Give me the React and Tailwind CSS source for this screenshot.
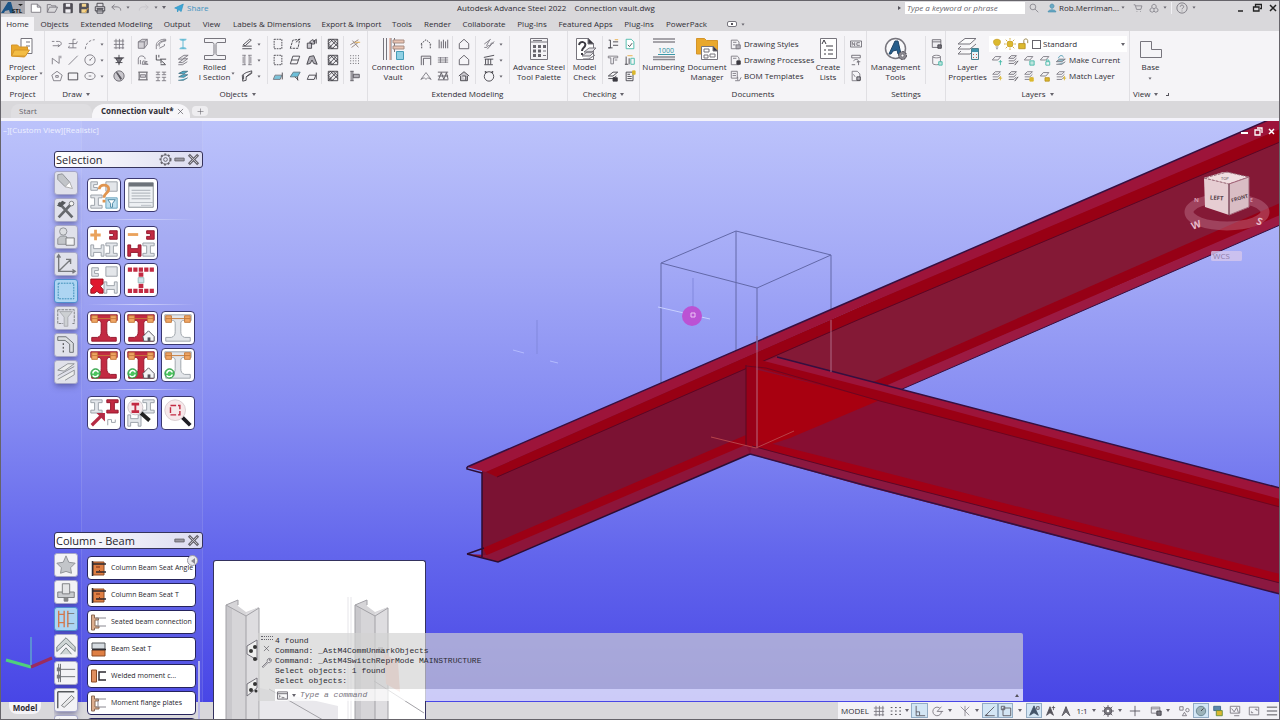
import React from "react";

const B = "#4db1cf";
const O = "#e8a93c";
const K = "#3c3a42";
const Y = "#dcb92e";
const T = "#3fb6a5";

// Each glyph is a list of [path, stroke, fill] on a 14 x 14 grid.
const GLYPHS = {
  newFile: [["M1.500 2.500h7l4 3.500v6h-11z M8.500 2.500v3.500h4", , "#fff"]],
  open: [["M1.500 12V3h4l1 1.500h5V6 M1.500 12l2.500-6h9.500l-3 6z"]],
  save: [["M2 2h10v10.500H2z", K, "#55535b"], ["M4.500 2h5v3.500h-5z M4 8.500h6v4H4z", "none", "#efeef2"]],
  saveAs: [["M2 2h10v10.500H2z", K, "#55535b"], ["M4.500 2h5v3.500h-5z M4 8.500h6v4H4z", "none", "#f3d48e"], ["M8 12l4-5", O]],
  print: [["M3.500 5V1.500h7V5 M1.500 5.500h11v5h-11z M3.500 9h7v4h-7z", K, "#dddbe0"], ["M3 7.500h8", K]],
  undo: [["M12.500 10c0-4-3-5-10-4 M5.500 3L2 6l3.500 3", "#77757d"]],
  redo: [["M1.500 10c0-4 3-5 10-4 M8.500 3L12 6 8.500 9", "#c4c2c8"]],
  plane: [["M1 7L13 1.500 10 12 6.500 9 5 12.500 4.500 8z", "#2c94c4", "#3da6d6"]],
  search: [["M9.500 5.500a4 4 0 1 1-8 0a4 4 0 1 1 8 0 M8.500 8.500L13 13", "#77757d"]],
  user: [["M7 1.500c4 0 3.500 6 0 6s-4-6 0-6z M1.500 12.500c0-4 11-4 11 0z", "#4a8fae", "#6aa9c4"]],
  cart: [["M1 2.500h2l2 6.500h6l1.500-5H4 M5.500 11.500v1 M10.500 11.500v1", "#77757d"]],
  apps: [["M7 1.500l3 2v3l-3 1.500-3-1.500v-3z M4 7L1.500 8.500v3L4.500 13l2.500-1.500V8 M7 11.500L9.500 13l3-1.500v-3L10 7"]],
  help: [["M13 7a6 6 0 1 1-12 0a6 6 0 1 1 12 0 M5 5.500c0-2.500 4-2.500 4 0C9 7 7 7 7 8.500 M7 10v1"]],
  polyline: [["M1 4h3 M6 4h3c4 0 4 5 0 5H2 M8 7.500L10 9 8 10.500"]],
  offset: [["M7 1.500v10 M2 6.500h9L12 4 M2 11.500h9 M10 1.500H7 M3 9l-1.500 2.500"]],
  arc: [["M1.500 13C2 6 6 2.500 12.500 2", , , "3 2"]],
  spline: [["M1.500 12V5l8 6V2 M11.500 2v3"]],
  line: [["M2 12.500L12.500 2"]],
  circle: [["M13 7a6 6 0 1 1-12 0a6 6 0 1 1 12 0 M7 7l3-3 M6 7h2"]],
  pentagon: [["M7 1.500l6 4.500-2 6.500H3L1 6z M5.500 8.500h3v-2h-3z"]],
  rect: [["M1.500 3.500h11v8h-11z", K]],
  ellipse: [["M13 7c0 5.500-12 5.500-12 0s12-5.500 12 0 M5.500 7h3"]],
  grid: [["M3.500 1v12 M7.500 1v12 M11.500 1v12 M1 3.500h12 M1 7.500h12 M1 11.500h12"]],
  level: [["M1 4.500h12 M7 1v12 M3 10h8", K], ["M3 5l4 6 4-6z", K, "#77757d"]],
  compass: [["M13 7a6 6 0 1 1-12 0a6 6 0 1 1 12 0", "#66646c", "#c9c7cd"], ["M4 3l5 8 1-1L5 3z", "#55535b", "#55535b"]],
  cube: [["M1.500 4.500L6 1.500h6v6L8.500 12h-7z", , "#d2d0d5"], ["M1.500 4.500h7V12 M8.500 4.500L12 1.500"]],
  curvedBeam: [["M1.500 13V8C2 4 7 1 12.500 1.500v2C9 4 5 5 5 9v1 M3 9c1-4 5-6 9-6 M5 12l6-3V7"]],
  foldBeam: [["M1.500 12V6c0-5 8-5 8 0 M4 12V7 M7 8l5 1-4 1.500 5 1.500H6z"]],
  junction: [["M1.500 1v6h5 M4.500 1v3 M6 6h7 M7.500 8L12 12 M6.500 12.500h6 M7 6v5", K]],
  channel: [["M1.500 2.500h11 M1.500 11.500h11 M2.500 3v8 M11.500 3v8", K], ["M4 5.500h6v3H4z", , "#d2d0d5"]],
  quad: [["M1 2.500h5 M3.500 2.500v3 M1 5.500h5 M8 2.500h5 M10.500 2.500v3 M8 5.500h5 M1 8.500h5 M3.500 8.500v4 M1 12.500h5 M8 8.500h5 M10.500 8.500v4 M8 12.500h5"]],
  column: [["M3 1.500h8 M3 12.500h8 M7 1.500v11 M4 2.500h6 M4 11.500h6", B]],
  beam: [["M1.500 6L8 1.500h5L6.500 6z M2 10l6-4.500h4.500L6.500 10z M1.500 12.500h5L12 9", , "#e4e3e7"]],
  beamBlue: [["M2 4L7 1.500h5.500L8 4.500z M2 8l5-2.500h5.500L8 8.500z M1.500 12h6L12.500 9", "#4a7484", B]],
  taper: [["M1.500 12.500h11 M1.500 9.500h11 M2.500 8L10 1.500l2 1L5 9z", K]],
  compound: [["M1.500 1.500h4 M4.500 1.500v11 M1.500 12.500h4 M12.500 1.500h-4 M9.500 1.500v11 M12.500 12.500h-4 M2.500 3v8 M11.500 3v8"]],
  fold: [["M1.500 6L6 3l6.500-2v3L6 8v4l-4 1z M6 8l6-5 M3 6v5", K]],
  plateRect: [["M2.500 1.500h9v11h-9z", K, , "2 1"]],
  platePoly: [["M1.500 12L4.500 2.500l8-1-2 10.500z", K, , "3 1"], ["M8 5L13 1", K]],
  plateCone: [["M1.500 6h5v6h-5z M4 5l3-3 3 1v4H7z M8 5l4-3.500v5", K, "#c9c7cd"]],
  plateSkew: [["M4.500 2.500h8l-3 9h-8z M3 7h8", K]],
  plateTwist: [["M1 12L4 3l5-1 4 10-4-1-2-4-2 4z", K, "#b2b0b7"]],
  plateFold: [["M1.500 11l2-5h8l-2 5z", , "#7cc3da"], ["M12 3v8", K]],
  plateBlue: [["M1.500 8L5 2.500h8L10 8z", "#55737f", "#6cbfd9"], ["M7 8l4 4 M10 8v4", K]],
  platePlain: [["M1.500 11l2-5h8l-2 5z M12 3v8", K]],
  grating: [["M1.500 1.500h11v11h-11z", K, "#efeef2"], ["M1.500 4l2.500-2.500 8.500 8.500 M1.500 9l4 3.500 M1.500 6.500L7 12.500 M7 1.500L12.500 7 M12 1.500L1.500 12.500 M7 1.500L1.500 7 M12.500 6L6 12.500", K]],
  bolts: [["M1.500 8L11 2 M3 11l8-6 M4 3l7 8", "#8b7b73"], ["M7 5h6", O]],
  dots: [["M1.500 2h12 M1.500 5h12 M1.500 8h12 M1.500 11h12", K, , "1 2"]],
  weldSpot: [["M2.500 1.500v11 M4.500 1.500v11 M1.500 1.500h4 M1.500 12.500h4 M5 5h7v4H5z", "#55535b", "#b2b0b7"]],
  gable: [["M1 7L7 2l6 5 M2 7v5 M12 7v5", K, , "2 1"]],
  fence: [["M2.500 2v10 M5 4v8 M7.500 2v10 M10 4v8 M12.500 2v10", "#55535b"]],
  portal: [["M1.500 13V2.500h11V13 M4 13V5h8", "#55535b"]],
  rails: [["M1 4.500h12 M1 7h12 M1 9.500h12 M4 3.500v7 M10 3.500v7"]],
  brace: [["M1 11L7 3l6 8 M1 11l4-2 2 2 2-2 4 2"]],
  lattice: [["M1 2.500h12 M1 11.500h12 M2 11L5 3l3 8 3-8 2 8 M1 7h12", "#55535b"]],
  house: [["M1.500 6.500L7 1.500l5.500 5v6h-11z", "#55535b"]],
  houseFill: [["M1 7l6-5 6 5 M3 7v5.500h8V7 M5 7h4v5", K, "#c9c7cd"]],
  stairs: [["M1.500 11h3l1-2h3l1-3h3 M1.500 7L9 1.500 M5 13l8-9 M4 9l4-7", "#77757d"]],
  railing: [["M1 4l12-2.500 M2 6h10 M3 6v6 M6 6v6 M9 6v6 M1.500 12.500h10", K, "#d2d0d5"]],
  ring: [["M12.500 7.500a5.500 5.500 0 1 1-11 0a5.500 5.500 0 1 1 11 0 M3 4L2.500 1.500 5 3 M11 4l.500-2.500L9 3", K]],
  checkDim: [["M2 2.500h2v9H1.500h5 M7 4.500h6 M7 8.500h6", K], ["M9 2h4", O]],
  checkDoc: [["M2.500 1.500h6l3 3v8h-9z", T, "#fff"], ["M4.500 8l2 2 3-4", K]],
  checkPipe: [["M1.500 2.500h11v2h-5v7h-3v-7h-3z M9 7h3", "#77757d"]],
  checkNum: [["M2.500 3v9 M1 12h4 M6 5v7", K], ["M8 5h4v7H8z", T], ["M4 2h6", O]],
  checkPlate: [["M1.500 7L7 2.500h5.500L7 7z M1.500 10H7l4-3", K], ["M7 9h5v4H7z", K, K]],
  checkList: [["M2.500 2.500h8v10h-8z M4 5h3 M4 7.500h5 M4 10h5", K], ["M10 1h3v4h-3z", Y, Y]],
  docStyle: [["M1.500 2.500h7l2 2v8h-9z M3.500 5h4 M3.500 8h3"], ["M7 8h5v4.500H7z", , "#b2b0b7"]],
  docGear: [["M1.500 2.500h7l2 2v8h-9z M3.500 5h4"], ["M8 8h4v4H8z", K, K]],
  docBom: [["M1.500 1.500h7v8h-7z M3 4h4 M3 6.500h4 M6 12.500h5l2-4 M9 8v4"]],
  nc: [["M.500 3.500h13v7H.500z M2.500 9V5l3 4V5 M11.500 5.500H8v3h3.500", "#66646c"]],
  dxf: [["M2 1.500h10v3H2z M4 8c4-4 8 0 4 2 M2 12.500h4 M10 9v4 M8 9h4", "#66646c"]],
  pdfGear: [["M2.500 1.500h6l3 3v8h-9z M4 5l2 3"], ["M8 8h4v4H8z", K, "#b2b0b7"]],
  window: [["M1.500 2h10v9h-10z M1.500 4.500h10", "#66646c", "#efeef2"], ["M8 8h4v4H8z", K, "#77757d"]],
  database: [["M2 3c0-2 9-2 9 0v8c0 2-9 2-9 0z M2 3c0 2 9 2 9 0"], ["M9 9h4v4H9z", T, "#bfe4de"]],
  bulb: [["M7 1.500c6 0 4 5.500 2 7H5C3 7 1 1.500 7 1.500z", "#caa32a", Y], ["M5.500 10.500h3 M6 12.500h2", "#77757d"]],
  sun: [["M10.500 7a3.500 3.500 0 1 1-7 0a3.500 3.500 0 1 1 7 0", "#caa32a", Y], ["M7 0v2 M7 12v2 M0 7h2 M12 7h2 M2 2l2 2 M10 10l2 2 M12 2l-2 2 M4 10l-2 2", "#caa32a"]],
  lockOpen: [["M2 6.500h7.500v6H2z", "#b8901e", Y], ["M8 6V3c0-2.500 4.500-2.500 4.500 0v3", "#8b7431"]],
  layA: [["M1.500 7L5 3h6.500L8 7z"], ["M11 7v6 M9 9h4", T]],
  layB: [["M2 5l3-3h6L8 5z M2 8h6l3-3 M2 11h6l3-3", "#66646c"], ["M9 13l4-5", K]],
  layC: [["M1.500 7L5 3h6.500L8 7z"], ["M8 8h5v5H8z", T, "#bfe4de"]],
  layD: [["M1.500 7L5 3h6.500L8 7z"], ["M8 9h4.500v4H8z M9 9V7h2.500v2", T]],
  layE: [["M2 5l3-3h6L8 5z M2 8h6l3-3 M2 11h6l3-3"], ["M11 7v5 M9 9.500h4", Y]],
  layF: [["M2 5l3-3h6L8 5z M2 8h6l3-3 M2 11h6l3-3"], ["M8 9h4v4H8z", Y, Y]],
  layG: [["M1.500 7L5 3h6.500L8 7z"], ["M7 9h5v4H7z", "#b8901e", Y]],
  makeCurrent: [["M1.500 9L5 6h7L8 9z M1.500 12H8l4-3", , "#8fbccb"], ["M4 5c1-4 5-4 6-1", "#3b8fa8"]],
  gear: [["M7 2.500a4.500 4.500 0 1 1 0 9a4.500 4.500 0 1 1 0-9", "#55535b", "#77757d"], ["M7 0v3 M7 11v3 M0 7h3 M11 7h3 M2 2l2 2 M10 10l2 2 M12 2l-2 2 M4 10l-2 2", "#55535b"], ["M7 5.500a1.500 1.500 0 1 1 0 3a1.500 1.500 0 1 1 0-3", "none", "#fff"]],
  snap: [["M2 3h12 M2 7h12 M2 11h12", K, , "2 3"]],
  ortho: [["M2.500 1v11.500H13 M2.500 8h4v4", "#55535b"]],
  polar: [["M11 7.500a5 5 0 1 1-2-4 M6 7.500h7 M6 7.500L11 2"]],
  iso: [["M2 2l10 10 M7 1v6 M12 2l-5 5 M7 7v6", "#8a8890"]],
  track: [["M1.500 12.500h11 M2 12L12 2 M1 12h4", "#55535b"]],
  osnap: [["M3.500 3.500h9v9h-9z M1.500 1.500h4v4h-4z", "#55535b"]],
  annoA: [["M7 1L2 12l5-3 5 3z", "#43556a", "#43556a"], ["M10 2h3v3h-3z", "#55535b"]],
  annoB: [["M7 2L3 12l4-3 4 3z", "#55535b", "#55535b"], ["M11 1v5 M9 3h4", "#55535b"]],
  annoC: [["M7 2L2.500 12.500 7 8l4.500 4.500z M7 2v6", "#55535b", "#77757d"]],
  plus: [["M7 1v12 M1 7h12", "#55535b"]],
  screen: [["M1.500 2.500h10v7h-10z M1.500 4.500h10"], ["M8 7h5v5H8z", K, "#77757d"]],
  shapes: [["M2 2h4v4H2z M13 6a2 2 0 1 1-4 0a2 2 0 1 1 4 0 M5 12.500l2.500-4 2.500 4z"]],
  disc: [["M12.500 7a5.500 5.500 0 1 1-11 0a5.500 5.500 0 1 1 11 0", "#62808a", "#9cb2b8"], ["M7 7l3-3", K]],
  picture: [["M2 1.500h8v5H2z", "#3b668b", "#5c87a8"], ["M5 6.500h7v6H5z", "#5c8a3c", Y]],
  graph: [["M1.500 1.500h11v8h-11z M3 4l3 4 3-5 2 6 M6 12.500h6"]],
  fullscreen: [["M1.500 2.500h11v9h-11z M8 5h2.500v2 M4 7.500V9h2"]],
  menu: [["M1 2.500h12 M1 7h12 M1 11.500h12", K]],
  wrench: [["M1.500 12.500L8 6c-1-3 2-5 4-4L10 4l1 1 2-2c1 3-2 5-4 4L3 13z", "#66646c", "#f2f2f2"]],
  close: [["M3 3l8 8 M11 3l-8 8", "#55535b"]],
};

function Glyph({ n, className = "size-3" }) {
  return (
    <svg viewBox="0 0 14 14" className={`${className} shrink-0`} aria-hidden="true">
      {GLYPHS[n].map(([d, s, f, dash], i) => (
        <path key={i} d={d} stroke={s || "#77757d"} fill={f || "none"} strokeDasharray={dash} />
      ))}
    </svg>
  );
}

function Caret({ className = "" }) {
  return <span className={`inline-block shrink-0 border-x-2 border-t-3 border-x-transparent border-t-[#66646c] ${className}`} />;
}

function Tool({ n, caret }) {
  return (
    <button aria-label={n} className="flex h-4 w-full items-center justify-center gap-1">
      <Glyph n={n} />
      {caret && <Caret className="scale-75" />}
    </button>
  );
}

function Col({ w = "w-[17px]", icons, caret }) {
  return (
    <div className={`${w} flex shrink-0 flex-col`}>
      {icons.map((n, i) => <Tool key={i} n={n} caret={caret} />)}
    </div>
  );
}

const Sep = () => <span className="mx-px h-12 w-px shrink-0 bg-[#e0dfe3]" />;

function Big({ w, icon, lines, caret }) {
  return (
    <button className={`${w} relative flex shrink-0 flex-col items-center whitespace-nowrap text-center`}>
      <svg viewBox="0 0 24 24" className="mt-px size-6" fill="none" stroke="#77757d" aria-hidden="true">{icon}</svg>
      <span className="mt-px leading-[10px]">{lines[0]}<br />{lines[1]}</span>
      {caret && <Caret className="absolute right-0 bottom-3 scale-75" />}
    </button>
  );
}

function Panel({ w, title, caret, children }) {
  return (
    <section className={`${w} flex shrink-0 flex-col border-r border-[#e0dfe3]`}>
      <div className="flex h-14 justify-start pt-[5px]">{children}</div>
      <h2 className="flex items-center justify-center gap-1 leading-[14px]">
        {title}{caret && <Caret />}
      </h2>
    </section>
  );
}

const bigIcons = {
  explorer: <><path d="M11 1.500h11v15H11z" fill="#fff" /><path d="M16 5h4M16 9h4" /><path d="M1.500 19V8h6l2 2h8v4l-3 6z" fill="#e9a82c" stroke="#d4942a" /><path d="M1.500 19l3-6h15l-4 6z" fill="#f3bd45" stroke="#d4942a" /></>,
  section: <path d="M1.500 1.500h21v4H15c-1.500 0-2 1-2 2v9c0 1 .500 2 2 2h7.500v4h-21v-4H9c1.500 0 2-1 2-2v-9c0-1-.500-2-2-2H1.500z" />,
  vault: <><path d="M2.500 1v22M5.500 1v22M10 1v22M13.500 1v14" /><path d="M9 1v22" stroke="#d98f75" /><path d="M12 3h11v3H12zM12 9h11v3H12z" fill="#e9c3b2" stroke="#a78d83" /><path d="M15.500 14.500h7v8h-7z" fill="#8fd0e4" stroke="#459cb7" /></>,
  palette: <><path d="M3.500 1.500h17v21h-17zM3.500 5h17" fill="#f4f3f6" /><path d="M6 8h3v3H6zM11 8h3v3h-3zM16 8h3v3h-3zM6 12.500h3v3H6zM11 12.500h3v3h-3zM6 17h3v3H6zM11 17h3v3h-3z" fill="#66646c" stroke="none" /><path d="M6 3.500h9M16 14h3M16 18.500h3" /></>,
  check: <><path d="M3.500 1.500h12l5 5v16h-17z" fill="#fff" /><path d="M15 1l6 6h-6z" fill="#3c3a42" /><path d="M6 8c1-5 8-3 6 1-1 2-3 2-3 5M9 16v2" stroke="#3c3a42" strokeWidth="2" /><path d="M11 15l5-4h7l-4 4zM9 19l5-4h7l-4 4zM10 22h6l6-4" fill="#e2e1e5" /></>,
  numbering: <><path d="M1 2h22M1 5h22M1 20h22M1 22.500h22" stroke="#8a8890" strokeWidth="1.500" /><path d="M6 17.500h17" stroke="#3997a6" /><text x="6" y="15.500" fill="#2f8fa0" stroke="none" fontSize="7">1000</text></>,
  documents: <><path d="M1.500 17V1.500h8l2 2h11V17z" fill="#e9a82c" stroke="#d4942a" /><path d="M6.500 9.500h12l4 4v9h-16z" fill="#fff" /><path d="M9 12h5v3H9zM9 18h4v3H9zM15 17h5v3h-5z" /><path d="M18 9l5 5h-5z" fill="#3c3a42" /></>,
  lists: <><path d="M4.500 1.500h16v20h-16z" fill="#fff" /><path d="M6 7l2-4 2 4M10 9h7M8 13h2M12 13h5M8 17h2M12 17h5" stroke="#3c3a42" /></>,
  management: <><circle cx="11.500" cy="11.500" r="10" strokeWidth="1.500" fill="#f9f9fb" /><path d="M5 17L11 4h3l3 13h-3l-1-4-4 1-2 3z" fill="#265e8c" stroke="#1d4467" /><circle cx="18.500" cy="18.500" r="4" fill="#8a8890" stroke="#3c3a42" strokeDasharray="2 1" /><circle cx="18.500" cy="18.500" r="1.500" fill="#fff" /></>,
  layers: <><path d="M2 7L9 1.500h11L14 7zM2 12h12l6-5M2 17h12l6-5M2 12l3-3M2 17l3-3" fill="#fbfbfc" /><path d="M15.500 11.500h7v11h-7z" fill="#e8f3f5" stroke="#477f8d" /><path d="M16 12h6v3h-6z" fill="#3f95ad" stroke="none" /><path d="M17 17.500h4M17 20.500h4" stroke="#c05f53" strokeDasharray="1 2" /></>,
  base: <path d="M1.500 4.500h11v8h10v8h-21z" />,
};

const MENU = [
  ["Home", "w-[33px] bg-[#f5f4f7]"], ["Objects", "w-[41px]"], ["Extended Modeling", "w-[83px]"], ["Output", "w-[38px]"],
  ["View", "w-[31px]"], ["Labels & Dimensions", "w-[90px]"], ["Export & Import", "w-[69px]"], ["Tools", "w-[32px]"],
  ["Render", "w-[39px]"], ["Collaborate", "w-[54px]"], ["Plug-ins", "w-[42px]"], ["Featured Apps", "w-[65px]"],
  ["Plug-ins", "w-[42px]"], ["PowerPack", "w-[53px]"],
];

function TitleBar() {
  return (
    <header className="flex h-[13px] shrink-0 items-center whitespace-nowrap">
      <div className="flex w-[456px] shrink-0 items-center">
        <button aria-label="Application menu" className="mr-[5px] h-[13px] w-6 bg-[#a8a7ad]">
          <svg viewBox="0 0 24 13" className="h-[13px] w-6">
            <path d="M0 12L7 1h3l3 11H9l-1-3-4 1-1 2z" fill="#1d5486" />
            <path d="M17 3h5l-2.500 2z" fill="#222" />
            <text x="11" y="12" fontSize="6" fontWeight="700" fill="#1d1c22">STL</text>
          </svg>
        </button>
        <div className="flex items-center gap-1">
          {["newFile", "open", "save", "saveAs", "print", "undo"].map((n) => <button key={n} aria-label={n}><Glyph n={n} /></button>)}
          <Caret className="scale-75" />
          <button aria-label="redo" className="ml-1"><Glyph n="redo" /></button>
          <Caret className="scale-75" />
          <Caret />
          <button className="ml-1 flex items-center gap-[3px] text-[#3f93c0]"><Glyph n="plane" className="size-[10px]" />Share</button>
        </div>
      </div>
      <h1 className="flex flex-1 gap-2"><span>Autodesk Advance Steel 2022</span><span>Connection vault.dwg</span></h1>
      <div className="flex w-[381px] shrink-0 items-center">
        <span className="mr-1 border-y-2 border-l-3 border-y-transparent border-l-[#55535b]" />
        <input aria-label="Search" placeholder="Type a keyword or phrase" className="h-3 w-[120px] bg-white px-0.5 italic placeholder:text-[#66646c]" />
        <button aria-label="search" className="ml-1"><Glyph n="search" className="size-[10px]" /></button>
        <button className="ml-2 flex items-center gap-0.5"><Glyph n="user" className="size-[10px]" />Rob.Merriman...<Caret className="scale-75" /></button>
        <button aria-label="cart" className="ml-2"><Glyph n="cart" className="size-[10px]" /></button>
        <button aria-label="apps" className="ml-1.5 flex items-center gap-1"><Glyph n="apps" className="size-[10px]" /><Caret className="scale-75" /></button>
        <span className="mx-1 h-3 w-px bg-[#f1f0f4]" />
        <button aria-label="help" className="flex items-center gap-1"><Glyph n="help" /><Caret className="scale-75" /></button>
        <div className="ml-auto flex gap-1.5 pr-px">
          <button aria-label="Minimize"><svg viewBox="0 0 10 10" className="size-[10px]"><path d="M2 8h5" stroke="#222" strokeWidth="1.500" /></svg></button>
          <button aria-label="Restore"><svg viewBox="0 0 10 10" className="size-[10px]" fill="none" stroke="#222"><path d="M3.500 4V1.500h6v4H8M1.500 4h5.500v4H1.500z" strokeWidth="1.300" /></svg></button>
          <button aria-label="Close"><svg viewBox="0 0 10 10" className="size-[10px]"><path d="M2 2l6 6M8 2l-6 6" stroke="#222" strokeWidth="1.500" /></svg></button>
        </div>
      </div>
    </header>
  );
}

function Ribbon() {
  return (
    <div className="flex h-[70px] shrink-0 overflow-hidden bg-[#f5f4f7] whitespace-nowrap">
      <Panel w="w-[44px]" title="Project"><Big w="w-[42px]" icon={bigIcons.explorer} lines={["Project", "Explorer"]} caret /></Panel>
      <Panel w="w-[63px]" title="Draw" caret>
        <span className="w-[3px]" />
        <Col icons={["polyline", "spline", "pentagon"]} />
        <Col w="w-4" icons={["offset", "line", "rect"]} />
        <Col w="w-[26px]" icons={["arc", "circle", "ellipse"]} caret />
      </Panel>
      <Panel w="w-[260px]" title="Objects" caret>
        <Col w="w-[22px]" icons={["grid", "level", "compass"]} />
        <Sep />
        <Col w="w-[19px]" icons={["cube", "foldBeam", "channel"]} />
        <Col w="w-[17px]" icons={["curvedBeam", "junction", "quad"]} />
        <Sep />
        <Col w="w-[22px]" icons={["column", "beam", "beamBlue"]} />
        <Big w="w-[41px]" icon={bigIcons.section} lines={["Rolled", "I Section"]} caret />
        <Col w="w-[31px]" icons={["taper", "compound", "fold"]} caret />
        <Sep />
        <Col w="w-[17px]" icons={["plateRect", "plateRect", "plateFold"]} />
        <Col icons={["platePoly", "plateSkew", "plateBlue"]} />
        <Col w="w-[17px]" icons={["plateCone", "plateTwist", "platePlain"]} />
        <Sep />
        <Col w="w-[19px]" icons={["grating", "grating", "grating"]} />
        <Sep />
        <Col w="w-5" icons={["bolts", "dots", "weldSpot"]} />
      </Panel>
      <Panel w="w-[200px]" title="Extended Modeling">
        <Big w="w-[50px]" icon={bigIcons.vault} lines={["Connection", "Vault"]} />
        <Col w="w-4" icons={["gable", "portal", "brace"]} />
        <Col icons={["fence", "rails", "lattice"]} />
        <Sep />
        <Col w="w-5" icons={["house", "house", "houseFill"]} />
        <Sep />
        <Col w="w-[31px]" icons={["stairs", "railing", "ring"]} caret />
        <Sep />
        <Big w="w-[56px]" icon={bigIcons.palette} lines={["Advance Steel", "Tool Palette"]} />
      </Panel>
      <Panel w="w-[72px]" title="Checking" caret>
        <Big w="w-[33px]" icon={bigIcons.check} lines={["Model", "Check"]} />
        <Sep />
        <Col icons={["checkDim", "checkPipe", "checkPlate"]} />
        <Col icons={["checkDoc", "checkNum", "checkList"]} />
      </Panel>
      <Panel w="w-[227px]" title="Documents">
        <Big w="w-[47px]" icon={bigIcons.numbering} lines={["Numbering", ""]} />
        <Big w="w-[40px]" icon={bigIcons.documents} lines={["Document", "Manager"]} />
        <div className="ml-[3px] flex w-[83px] flex-col">
          {[["docStyle", "Drawing Styles"], ["docGear", "Drawing Processes"], ["docBom", "BOM Templates"]].map(([n, t]) => (
            <button key={t} className="flex h-4 items-center gap-0.5"><Glyph n={n} />{t}</button>
          ))}
        </div>
        <Big w="w-[30px]" icon={bigIcons.lists} lines={["Create", "Lists"]} />
        <Sep />
        <Col w="w-5" icons={["nc", "dxf", "pdfGear"]} />
      </Panel>
      <Panel w="w-[79px]" title="Settings">
        <Big w="w-[57px]" icon={bigIcons.management} lines={["Management", "Tools"]} />
        <Sep />
        <Col w="w-[19px]" icons={["window", "database"]} />
      </Panel>
      <Panel w="w-[184px]" title="Layers" caret>
        <Big w="w-[43px]" icon={bigIcons.layers} lines={["Layer", "Properties"]} />
        <div className="flex flex-1 flex-col pr-0.5">
          <div className="relative flex h-4 items-center gap-px bg-white pl-0.5">
            <Glyph n="bulb" /><Glyph n="sun" /><Glyph n="lockOpen" />
            <span className="ml-0.5 size-[9px] border border-[#66646c]" />
            <select aria-label="Layer" className="ml-px h-4 flex-1 appearance-none bg-transparent"><option>Standard</option></select>
            <Caret className="mr-0.5" />
          </div>
          {[["layA", "layB", "layC", "layD", "makeCurrent", "Make Current"], ["layE", "layB", "layF", "layG", "layE", "Match Layer"]].map((r) => (
            <div key={r[5]} className="flex h-4 items-center gap-1 pl-0.5">
              {r.slice(0, 4).map((n, i) => <button key={i} aria-label={n}><Glyph n={n} /></button>)}
              <button className="flex items-center gap-0.5"><Glyph n={r[4]} />{r[5]}</button>
            </div>
          ))}
        </div>
      </Panel>
      <section className="flex w-[41px] flex-col">
        <div className="flex h-14 pt-[5px]"><Big w="w-[41px]" icon={bigIcons.base} lines={["Base", <Caret key="c" className="scale-75" />]} /></div>
        <h2 className="flex items-center gap-1 pl-[3px] leading-[14px]">View <Caret /><span className="ml-1 size-[3px] border-r border-b border-[#55535b]" /></h2>
      </section>
    </div>
  );
}

function FileTabs() {
  return (
    <nav className="flex h-[17px] shrink-0 items-end pl-[10px]">
      <button className="h-[14px] w-[81px] rounded-t-lg bg-[#dfdee1] pl-2 text-left text-[#66646c]">Start</button>
      <div className="flex h-[14px] w-[98px] items-center rounded-t-xl bg-[#f7f6f9] pl-[9px] font-bold">
        <button>Connection vault*</button>
        <button aria-label="Close tab" className="ml-0.5"><Glyph n="close" className="size-[9px]" /></button>
      </div>
      <button aria-label="New tab" className="mb-[2px] ml-0.5 flex h-[10px] w-4 items-center justify-center rounded bg-[#eeedf0]"><Glyph n="plus" className="size-[7px]" /></button>
    </nav>
  );
}

function Model() {
  return (
    <svg viewBox="0 121 1280 581" preserveAspectRatio="xMidYMid slice" className="size-full" role="img" aria-label="Steel model view">
      <defs>
        <linearGradient id="sky" x1="0" y1="0" x2="0" y2="1">
          <stop offset="0" stopColor="#bcc3fb" /><stop offset="0.250" stopColor="#a3a9f6" />
          <stop offset="0.500" stopColor="#858bf2" /><stop offset="0.750" stopColor="#6265ec" /><stop offset="1" stopColor="#4846e6" />
        </linearGradient>
      </defs>
      <path d="M0 121h1280v581H0z" fill="url(#sky)" />
      <path d="M736 231v120M661 263v122M831 255v70" stroke="#6268a8" fill="none" />
      <path d="M661 263l75-32 95 24-74 33z" stroke="#6268a8" fill="none" />
      <path d="M482 471L860 307 1280 124v84L900 389 498 562 482 557z" fill="#7b1233" />
      <path d="M860 307L1280 124v84L873 386 746 440V360z" fill="#841936" />
      <path d="M482 474L746 360v80L482 555z" fill="#7b1233" />
      <path d="M467 467L860 297 1280 115v15L860 307 486 472z" fill="#9d143a" />
      <path d="M486 472L860 307 1280 129v13L860 319 497 477z" fill="#980014" />
      <path d="M497 477L860 319 1280 142" stroke="#5c0524" fill="none" />
      <path d="M873 382L1280 203v13L883 387z" fill="#960016" />
      <path d="M883 387L1280 215v10L900 390z" fill="#9c1a42" />
      <path d="M900 390L1280 225" stroke="#350f40" fill="none" />
      <path d="M483 548L746 435v11L487 556z" fill="#9c0015" />
      <path d="M467 554L487 555 750 443v11L498 562z" fill="#8d153a" />
      <path d="M467 467L860 297 1280 115" stroke="#350f40" fill="none" strokeWidth="1.500" />
      <path d="M467 467v2l15 4M482 472v85M467 554l31 8L750 454M467 554l17-6" stroke="#2c0d33" fill="none" strokeWidth="1.500" />
      <path d="M746 365L1280 502v92L750 454 746 445z" fill="#870e32" />
      <path d="M746 367L880 400 790 438 757 449 746 445z" fill="#a80010" />
      <path d="M746 367h10v80l-10-2z" fill="#980018" />
      <path d="M746 365v80" stroke="#5b0820" />
      <path d="M757 364L777 357 1280 488v12L880 397z" fill="#9d143a" />
      <path d="M746 365l14-5 120 31 400 108v8L880 401z" fill="#9a0014" />
      <path d="M746 366l20 2 114 33 400 106" stroke="#6d0520" fill="none" />
      <path d="M777 357L1280 488" stroke="#350f40" fill="none" strokeWidth="1.500" />
      <path d="M757 440L860 466 1280 574v9L860 475 752 447z" fill="#a20016" />
      <path d="M752 446L860 475 1280 583v11L860 485 750 454z" fill="#8b1840" />
      <path d="M752 446L860 475 1280 583" stroke="#5c0828" fill="none" />
      <path d="M750 454L860 484 1280 594" stroke="#350f40" fill="none" strokeWidth="1.500" />
      <path d="M757 336v112M831 320v52" stroke="#b06a86" fill="none" />
      <path d="M757 288v62" stroke="#6268a8" />
      <path d="M711 437l45 11 38-17" stroke="#b8434a" fill="none" />
      <path d="M658 307l52 12" stroke="#c8d0ff" /><path d="M693 278v30M537 320v34" stroke="#8188dd" />
      <path d="M513 350l11 3M550 361l8 2" stroke="#b3baff" />
      <circle cx="692" cy="316" r="10" fill="#bb52d4" /><path d="M691 313h4v4h-4z" fill="none" stroke="#ecc4f5" />
      <ellipse cx="1227" cy="212" rx="38" ry="14" fill="none" stroke="#c77f98" strokeOpacity="0.400" strokeWidth="9" />
      <text x="1194" y="202" fontSize="6" fontWeight="700" fill="#d898ad">N</text>
      <text x="1250" y="202" fontSize="5" fontWeight="700" fill="#d898ad">E</text>
      <path d="M1204 178l19-6 26 5v30l-20 8-24-8z" fill="#e6cdd2" />
      <path d="M1204 178l25 6 20-7-22-5z" fill="#f0dde0" stroke="#93606f" strokeDasharray="3 1" />
      <path d="M1229 184l20-7v30l-20 8z" fill="#d9bdc4" stroke="#a3667a" />
      <path d="M1229 184v31" stroke="#6d3c4e" />
      <text x="1210" y="200" fontSize="6" fontWeight="700" fill="#554049" transform="rotate(5 1216 198)">LEFT</text>
      <text x="1231" y="200" fontSize="5" fontWeight="700" fill="#554049" transform="rotate(-16 1239 198)">FRONT</text>
      <text x="1221" y="180" fontSize="4" fill="#554049">TOP</text>
      <text x="1191" y="228" fontSize="10" fontWeight="700" fill="#e8bac8" transform="rotate(-20 1197 224)">W</text>
      <text x="1257" y="225" fontSize="10" fontWeight="700" fill="#e8bac8" transform="rotate(20 1260 221)">S</text>
      <path d="M1213 251h27c2 0 2 1 2 2v6c0 2-1 2-2 2h-27c-2 0-2-1-2-2v-6c0-2 1-2 2-2z" fill="#d4c7ee" fillOpacity="0.800" />
      <text x="1213" y="259" fontSize="8" fill="#8f7fa8">WCS</text>
      <path d="M1241 133h7" stroke="#fff" strokeWidth="2" />
      <path d="M1255 130h5v5h-5zM1257 128h5v5" stroke="#fff" fill="none" strokeWidth="1.300" />
      <path d="M1269 129l5 5M1274 129l-5 5" stroke="#fff" strokeWidth="1.500" />
      <path d="M31 637v29" stroke="#5b8fd4" strokeWidth="2" /><path d="M31 667L6 660" stroke="#4fd07c" strokeWidth="3" /><path d="M31 667l21-9" stroke="#9b2c5e" strokeWidth="3" />
    </svg>
  );
}

const IBEAM = "M3 3h28v6h-8c-2 0-3 1-3 3v9c0 3 1 5 4 6h6v4H4v-4h6c3-1 4-3 4-6v-9c0-2-1-3-3-3H3z";
const smallI = (x, y, f, s) => <path transform={`translate(${x} ${y})`} d="M0 0h12v3H8v8h4v3H0v-3h4V3H0z" fill={f} stroke={s} />;
const smallH = (x, y, f, s) => <path transform={`translate(${x} ${y})`} d="M0 0h3v4h8V0h3v12h-3V8H3v4H0z" fill={f} stroke={s} />;
const Marked = ({ red, home, refresh }) => (
  <>
    <path d={IBEAM} fill={red ? "#c22a42" : "#e3e6ea"} stroke={red ? "#93142b" : "#9da3aa"} />
    <path d="M4 4h6v7H4zM24 4h6v7h-6zM4 7h26" fill="#f0a765" stroke="#c57a3b" />
    {home && <><path d="M19 26l6-6 6 6v5H20z" fill="#f2f3f4" stroke="#55535b" /><path d="M24 27h3v4h-3z" fill="#55535b" /></>}
    {refresh && <><circle cx="8" cy="26" r="5" fill="#4cc45f" stroke="#2d9643" /><path d="M5 26c1-4 5-4 6-1M11 27c-1 3-5 3-6 1" stroke="#fff" fill="none" strokeWidth="1.500" /></>}
  </>
);
const lg = "#e3e6ea", ls = "#9aa0a7", rd = "#c22a42", rs = "#93142b";
const lens = (cx, cy) => <><path d={`M${cx + 6} ${cy + 6}l9 8`} stroke="#222" strokeWidth="4" /><circle cx={cx} cy={cy} r="8" fill="#f3e6ea" fillOpacity="0.850" stroke="#c9c4c8" /></>;

const SELECTION = [
  [
    [["Select by filter", <g key="a"><path d="M3 3h7v3H6v3h4v3H3z" fill={lg} stroke={ls} /><path d="M19 3h12v10H19z" fill={lg} stroke={ls} />{smallI(3, 17, lg, ls)}<path d="M19 20h12v11H19z" fill="#bfe0f0" stroke="#6aa3be" /><path d="M21 22h8l-3 4v4h-2v-4z" fill="#fff" stroke="#4a86a3" /><path d="M12 11c0-6 10-6 10 0 0 4-5 4-5 9M17 22v3" stroke="#e09550" strokeWidth="3" fill="none" /></g>],
      ["Selection list", <g key="b"><path d="M4 4h26v26H4z" fill="#edf0f3" stroke="#8b9198" /><path d="M4 4h26v4H4z" fill="#6d737a" /><path d="M7 12h20M7 15h20M7 18h20M7 21h20" stroke="#a5abb2" /><path d="M4 25h26M17 28h11" stroke="#b9bec4" /></g>]],
  ],
  [
    [["Add to selection", <g key="a"><path d="M8 3v11M2.500 8.500h11" stroke="#eaa25c" strokeWidth="3" /><path d="M23 4h8v9h-8v-3h4V7h-4z" fill={rd} stroke={rs} />{smallH(3, 19, lg, ls)}{smallI(19, 17, lg, ls)}</g>],
      ["Remove from selection", <g key="b"><path d="M3 8h11" stroke="#eaa25c" strokeWidth="3" /><path d="M23 4h8v9h-8v-3h4V7h-4z" fill={rd} stroke={rs} />{smallH(3, 19, rd, rs)}{smallI(19, 17, lg, ls)}</g>]],
    [["Clear selection", <g key="a"><path d="M4 4h7v3H7v3h4v3H4zM19 3h12v10H19z" fill={lg} stroke={ls} />{smallH(17, 19, lg, ls)}<path d="M3 16h13v5l-3 2.500 3 3.500v4h-4l-2.500-2L7 31H3v-4l3-3.500L3 21z" fill="#e0182e" stroke="#96101e" /></g>],
      ["Select parts", <g key="b"><path d="M3 6h28M3 28.500h28" stroke={rd} strokeWidth="4.500" strokeDasharray="4.500 1.300" /><path d="M17 9v4.500M17 21v4.500" stroke={rd} strokeWidth="5" /><path d="M14 14.500h6v5.500h-6z" fill="#cfe2ec" stroke="#9bb" /></g>]],
  ],
  [
    [["Main part", <Marked key="a" red />], ["Main part home", <Marked key="b" red home />], ["Unmark", <Marked key="c" />]],
    [["Refresh main", <Marked key="a" red refresh />], ["Refresh home", <Marked key="b" red home refresh />], ["Refresh unmarked", <Marked key="c" refresh />]],
  ],
  [
    [["Select similar", <g key="a">{smallI(3, 3, lg, ls)}{smallI(20, 3, rd, rs)}<path d="M4 30l10-10" stroke="#b52a44" strokeWidth="3.500" /><path d="M9 17h9v9z" fill="#b52a44" /><path d="M21 30v-6h4v3h4v-3" stroke={ls} fill="none" /></g>],
      ["Zoom to beam", <g key="b">{smallI(19, 3, lg, ls)}{smallH(3, 19, lg, ls)}{lens(11, 11)}<path d="M7 6h8v3h-3v5h3v3H7v-3h3V9H7z" fill={rd} /></g>],
      ["Zoom to selection", <g key="c"><path d="M20 20l10 10" stroke="#1f1e24" strokeWidth="4" /><circle cx="14" cy="14" r="11" fill="#f6e8ea" stroke="#d9cdd0" /><path d="M9 9h10v10H9z" fill="none" stroke={rd} strokeWidth="1.500" strokeDasharray="6 2" /></g>]],
  ],
];

const SIDE_TOP = [
  <><path d="M3 3l5-1 8 9v5h-5L3 8z" fill="#c2c5c9" stroke="#8c8f94" /><path d="M16 11l3 7-8-2z" fill="#fff" stroke="#aaa" /></>,
  <><path d="M4 20L18 5M4 4l15 16" stroke="#66696e" strokeWidth="3" /><path d="M2 7l6-5 4 2-6 5z" fill="#55585c" /><circle cx="18" cy="5" r="2.500" fill="#f4f4f4" stroke="#77797d" /></>,
  <><circle cx="9" cy="6" r="4" fill="#dcdee1" stroke="#8c8f94" /><path d="M3 20v-6l3-3h6l2 3v6z" fill="#c2c5c9" stroke="#8c8f94" /><path d="M12 13h9v8h-9z" fill="#f2f3f4" stroke="#77797d" /></>,
  <path d="M4 2v18h18M2 5l2-3 2 3M19 18l3 2-3 2M4 20L17 7M12 7h5v5" stroke="#77797d" fill="none" strokeWidth="1.500" />,
  <path d="M3.500 3.500h17v17h-17z" fill="none" stroke="#3689b5" strokeDasharray="2 1" />,
  <><path d="M3 3h18v15h-3M3 3v15h6" stroke="#77797d" strokeDasharray="3 1" fill="none" /><path d="M5 5h14l-5 6v10h-4V11z" fill="#cdd0d3" stroke="#a8abaf" /></>,
  <><path d="M3 3h9l8 7v10h-4v-9l-5-4H3z" fill="#dcdee1" stroke="#66696e" /><path d="M9 10v11" stroke="#222" strokeDasharray="2 2" /></>,
  <path d="M3 10L14 3h7L10 11zM3 16l18-10M3 20L21 10v5l-10 6" fill="#eceded" stroke="#8c8f94" />,
];
const SIDE_BOTTOM = [
  <path d="M12 2l3 7 7 1-5 5 1 6-6-2-6 2 1-6-5-5 7-1z" fill="#c2c5c9" stroke="#8c8f94" />,
  <><path d="M3 12h18v6H3z" fill="#c9cbce" stroke="#77797d" /><path d="M8 3h8v11H8z" fill="#e4e5e7" stroke="#77797d" /><path d="M10 18v4h4v-4" fill="#888" stroke="#77797d" /></>,
  <><path d="M4 3v18M10 3v18M14 3v18M4 7h6M4 16h6" stroke="#d3774c" strokeWidth="1.500" /><path d="M14 6h7M14 17h7" stroke="#77797d" /></>,
  <path d="M2 13L12 3l10 10v5L12 9 2 18zM6 21l6-7 6 7" fill="#cfd6d6" stroke="#6f7a7c" />,
  <><path d="M4 2v20M6 2v20M4 8h18M4 16h18" stroke="#66696e" /><path d="M2 6h4v4H2zM2 14h4v4H2z" fill="#77797d" /></>,
  <><path d="M3 3v18M3 3h18" stroke="#55585c" strokeWidth="1.500" /><path d="M7 18L18 7l3 3L10 20z" fill="#e8e9ea" stroke="#77797d" /></>,
  <path d="M5 3v18M9 4l5 5M5 8h5" stroke="#77797d" fill="none" />,
];

function PaletteTitle({ title, gear }) {
  return (
    <div className="flex h-[17px] w-[149px] items-center gap-px rounded-[3px] border border-[#35335b] bg-linear-to-r from-white to-[#dcdcf0] pr-0.5 pl-px text-[11px] text-[#26252c]">
      <h2 className="flex-1">{title}</h2>
      {gear && <button aria-label="Palette settings"><svg viewBox="0 0 14 14" className="size-[13px]" fill="none" stroke="#66646c"><circle cx="7" cy="7" r="5" /><circle cx="7" cy="7" r="5.500" strokeWidth="2" strokeDasharray="2 2" /><circle cx="7" cy="7" r="2" /></svg></button>}
      <button aria-label="Collapse"><svg viewBox="0 0 14 14" className="size-[13px]"><path d="M2 5.500h10v3H2z" fill="#9a98a2" stroke="#66646c" /></svg></button>
      <button aria-label="Close palette"><svg viewBox="0 0 14 14" className="size-[13px]"><path d="M2 2l10 10M12 2L2 12" stroke="#66646c" strokeWidth="3" /><path d="M3 3l8 8M11 3l-8 8" stroke="#c6c4cc" /></svg></button>
    </div>
  );
}

function SideButtons({ icons, active, tone }) {
  return (
    <div className="flex w-[33px] flex-col gap-[3px]">
      {icons.map((ic, i) => (
        <button key={i} aria-label={`Category ${i + 1}`} className={`size-6 rounded-[3px] border shadow-md shadow-[#3c3c78]/40 ${i === active ? "border-[#4d8fd0] bg-[#add5f2]" : tone}`}>
          <svg viewBox="0 0 24 24" className="size-full" fill="none">{ic}</svg>
        </button>
      ))}
    </div>
  );
}

function SelectionPalette() {
  return (
    <aside className="absolute top-[30px] left-[53px] w-[149px]">
      <PaletteTitle title="Selection" gear />
      <div className="flex pt-[3px]">
        <SideButtons icons={SIDE_TOP} active={4} tone="border-[#a5a6c8] bg-[#e0e1ea]" />
        <div className="flex flex-col gap-[14px] pt-[7px]">
          {SELECTION.map((rows, i) => (
            <div key={i} className="relative flex flex-col gap-[3px]">
              {i > 0 && <span className="absolute -top-[7px] h-px w-[108px] bg-linear-to-r from-transparent via-[#cfd2fa] to-transparent" />}
              {rows.map((r, j) => (
                <div key={j} className="flex gap-[3px]">
                  {r.map(([label, ic]) => (
                    <button key={label} aria-label={label} className="size-[34px] rounded-[4px] border border-[#3a3870] bg-white">
                      <svg viewBox="0 0 34 34" className="size-full" fill="none">{ic}</svg>
                    </button>
                  ))}
                </div>
              ))}
            </div>
          ))}
        </div>
      </div>
    </aside>
  );
}

const CONNS = [["Column Beam Seat Angle", 0], ["Column Beam Seat T", 0], ["Seated beam connection", 1], ["Beam Seat T", 2], ["Welded moment c...", 3], ["Moment flange plates", 1], ["", 1]];
const CONN_ICONS = [
  <><path d="M3 2h11v13H3z" fill="#df7f43" stroke="#8a4a25" /><path d="M2.500 1v15M3 4h13M6 12h10" stroke="#2c2a30" strokeWidth="1.500" /><path d="M6 7h4M9 10l3 3" stroke="#7a2d10" /></>,
  <><path d="M1.500 1h3v3h4v2H5v6h4v2H4.500v2h-3z" fill="#dcae8e" stroke="#8a6a55" /><path d="M6 4h10M6 12h10M8 6v5" stroke="#8a8890" /></>,
  <><path d="M2 9h13v6H2z" fill="#df7f43" stroke="#8a4a25" /><path d="M2 2h13v6H2z" fill="#d5dbe0" stroke="#55585c" /><path d="M2 8.500h14" stroke="#2c2a30" strokeWidth="1.500" /></>,
  <><path d="M1.500 2h5v12h-5z" fill="#df8f5f" stroke="#8a4a25" /><path d="M16 4H9v8h7" stroke="#2c2a30" fill="none" strokeWidth="1.500" /></>,
];

function ConnectionPalette() {
  return (
    <aside className="absolute bottom-0 left-[53px] h-[187px] w-[149px] overflow-hidden">
      <PaletteTitle title="Column - Beam" />
      <div className="flex pt-1">
        <SideButtons icons={SIDE_BOTTOM} active={2} tone="border-[#a5a6c8] bg-[#f3f3f6]" />
        <ul className="flex w-[109px] flex-col gap-[3px] pt-[3px]">
          {CONNS.map(([t, k], i) => (
            <li key={i} className="relative">
              <button aria-label={t || "More connections"} className="flex h-6 w-full items-center gap-1 overflow-hidden rounded-[4px] border border-[#25235c] bg-white pl-[2px] text-[7px] whitespace-nowrap text-[#26252c]">
                <svg viewBox="0 0 17 17" className="size-[17px] shrink-0" fill="none">{CONN_ICONS[k]}</svg>{t}
              </button>
              {i === 0 && <span className="absolute -top-px -right-[2px] flex size-[11px] items-center justify-center rounded-full border border-[#9a98a2] bg-[#e9e9ee]"><span className="border-y-3 border-r-4 border-y-transparent border-r-[#8a8890]" /></span>}
            </li>
          ))}
        </ul>
      </div>
      <span className="absolute right-[3px] bottom-0 h-[58px] w-0.5 bg-[#b9b8e8]" />
    </aside>
  );
}

const part = (x) => (
  <g transform={`translate(${x} 0)`}>
    <path d="M12 44l12-5v6l8 6 13-5v117H12z" fill="#d6d5d8" />
    <path d="M12 44l6 3v114h-6z" fill="#c9c8cc" /><path d="M32 52l13-6v115H32z" fill="#dedde0" />
    <path d="M12 44l12-5v5M12 44l20 11 13-8M32 55v106M12 44v117M45 47v113" stroke="#a2a1a6" fill="none" />
  </g>
);

function Preview() {
  return (
    <figure className="absolute bottom-0 left-[212px] h-[159px] w-[213px] overflow-hidden rounded-t-[3px] border border-b-0 border-[#34325e] bg-white">
      <svg viewBox="0 0 211 158" className="size-full" fill="none" role="img" aria-label="Connection preview">
        {part(0)}{part(129)}
        <path d="M134 36v123M137 36v123" stroke="#e6e5e9" />
        <path d="M46 127l78 18v14H46z" fill="#e9e8ec" /><path d="M55 128l54 31M160 120l50 32" stroke="#a2a1a6" />
        <path d="M170 92l14 9 2 30-14-8z" fill="#f2c8bd" />
        <path d="M33 85l10-6v20l-10-6zM33 123l10-6v10l-10 8z" fill="#eee" stroke="#77757d" />
        <g fill="#333">
          <circle cx="37" cy="90" r="2" /><circle cx="41" cy="86" r="2" /><circle cx="41" cy="98" r="2" />
          <circle cx="37" cy="129" r="2" /><circle cx="41" cy="123" r="2" /><circle cx="42" cy="130" r="1.500" />
        </g>
        <path d="M164 87h5M166 91h5" stroke="#77757d" />
      </svg>
    </figure>
  );
}

const LOG = ["4 found", "Command: _AstM4CommUnmarkObjects", "Command: _AstM4SwitchReprMode MAINSTRUCTURE", "Select objects: 1 found", "Select objects:"];

function CommandLine() {
  return (
    <section className="absolute right-[20%] bottom-[18px] left-[257px] flex overflow-hidden rounded-tr-xs font-['Liberation_Mono',monospace] text-[8px] leading-[10px] text-[#2c2b33]">
      <div className="flex w-[17px] flex-col items-center gap-1 bg-[#d2d2d2]/67 pt-[3px]">
        <span className="h-1 w-3 border-y border-dotted border-[#66646c]" />
        <button aria-label="Close command line"><Glyph n="close" className="size-[9px]" /></button>
        <button aria-label="Customize"><Glyph n="wrench" className="size-[11px]" /></button>
      </div>
      <div className="flex-1">
        <div className="bg-[#d2d2d2]/67 py-[3px]">
          {LOG.map((l) => <p key={l} className="whitespace-nowrap">{l}</p>)}
        </div>
        <div className="flex h-3 items-center gap-1 bg-white/72 pr-1">
          <svg viewBox="0 0 12 10" className="ml-0.5 h-[9px] w-[11px]" fill="none" stroke="#66646c"><path d="M.500 1h11v8H.500zM.500 3h11M2 5l1.500 1L2 7M5 7.500h3" /></svg>
          <Caret />
          <input aria-label="Command" placeholder="Type a command" className="flex-1 italic placeholder:text-[#77757d]" />
          <span className="border-x-2 border-b-3 border-x-transparent border-b-[#55535b]" />
        </div>
      </div>
    </section>
  );
}

const STATUS = [
  ["grid", "w-[17px]"], ["snap", "w-6", 0, 1], ["ortho", "w-[17px]", 1], ["polar", "w-7", 0, 1], ["iso", "w-[26px]", 0, 1],
  ["track", "w-[16px]", 1], ["osnap", "w-[15px]", 1], [null, "w-[13px]"], ["annoA", "w-[16px]", 1], ["annoB", "w-[16px]"], ["annoC", "w-[16px]"],
  ["1:1", "w-6", 0, 1], ["gear", "w-[27px]", 0, 1], ["plus", "w-[20px]"], ["screen", "w-[29px]", 0, 1], ["shapes", "w-[19px]"],
  ["disc", "w-[16px]", 1], ["picture", "w-[17px]"], ["graph", "w-[18px]"], ["fullscreen", "w-[20px]"], ["menu", "w-[15px]"],
];

function StatusBar() {
  return (
    <footer className="flex h-[17px] shrink-0 items-start justify-between">
      <button className="ml-2 h-3 w-8 rounded-b-lg bg-[#f5f4f7] font-bold">Model</button>
      <div className="flex h-full items-center bg-[#f3f2f6] pl-0.5">
        <button className="w-[30px]">MODEL</button>
        {STATUS.map(([n, w, on, caret], i) =>
          n ? (
            <button key={i} aria-label={n} className={`${w} flex h-[15px] shrink-0 items-center justify-center gap-1 ${on ? "border border-[#93acc4] bg-[#d3e6f5]" : ""}`}>
              {n === "1:1" ? <span>1:1</span> : <Glyph n={n} />}
              {caret && <Caret />}
            </button>
          ) : (
            <span key={i} className={`${w} flex justify-center`}><Caret /></span>
          )
        )}
      </div>
    </footer>
  );
}

export default function App() {
  return (
    <div className="relative flex h-screen flex-col overflow-hidden border border-[#66646a] bg-[#d9d8db] font-['Open_Sans','Noto_Sans',sans-serif] text-[8px] leading-[10px] text-[#2f2d35]">
      <TitleBar />
      <nav className="flex h-[17px] shrink-0 items-end whitespace-nowrap">
        {MENU.map(([t, w], i) => <button key={i} className={`${w} h-[14px] shrink-0`}>{t}</button>)}
        <button aria-label="Ribbon display" className="ml-[14px] flex h-[14px] items-center gap-1"><span className="flex h-[6px] w-[10px] items-center justify-center rounded-xs border border-[#77757d] bg-white"><span className="size-0.5 bg-[#55535b]" /></span><Caret className="scale-75" /></button>
      </nav>
      <Ribbon />
      <FileTabs />
      <div className="h-[3px] shrink-0 bg-[#f4f3fa]" />
      <main className="relative min-h-0 flex-1">
        <div className="absolute inset-0"><Model /></div>
        <div className="absolute top-0 bottom-0 left-[80px] w-[122px] border-x border-white/10 bg-[#9aa0d8]/10" />
        <p className="absolute top-1 left-0.5 text-[#eef0ff]">–][Custom View][Realistic]</p>
        <SelectionPalette />
      </main>
      <StatusBar />
      <Preview />
      <ConnectionPalette />
      <CommandLine />
    </div>
  );
}
